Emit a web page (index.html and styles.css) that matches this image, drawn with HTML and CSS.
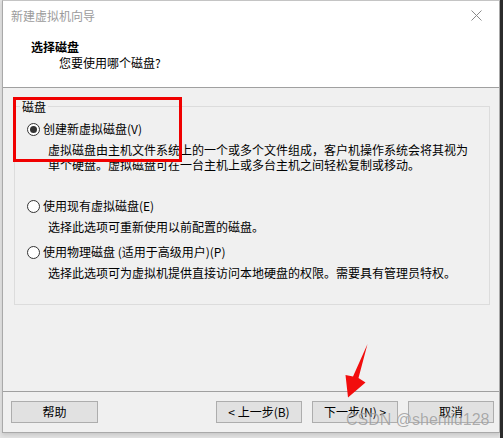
FILE: index.html
```html
<!DOCTYPE html>
<html lang="zh-CN">
<head>
<meta charset="utf-8">
<title>新建虚拟机向导</title>
<link rel="stylesheet" href="styles.css">
</head>
<body>
<div class="screen">
  <div class="dialog">
    <div class="titlebar">
      <span class="title">新建虚拟机向导</span>
      <svg class="close" width="11" height="11" viewBox="0 0 11 11"><path d="M0.5 0.5 L10.5 10.5 M10.5 0.5 L0.5 10.5" stroke="#8a8a8a" stroke-width="1" fill="none"/></svg>
    </div>
    <div class="header">
      <div class="h-title">选择磁盘</div>
      <div class="h-sub">您要使用哪个磁盘?</div>
    </div>
    <div class="content">
      <div class="group">
        <span class="legend">磁盘</span>
        <div class="opt first">
          <span class="radio checked"></span>
          <span class="label">创建新虚拟磁盘(V)</span>
        </div>
        <div class="desc">虚拟磁盘由主机文件系统上的一个或多个文件组成，客户机操作系统会将其视为<br>单个硬盘。虚拟磁盘可在一台主机上或多台主机之间轻松复制或移动。</div>
        <div class="opt second">
          <span class="radio"></span>
          <span class="label">使用现有虚拟磁盘(E)</span>
        </div>
        <div class="desc">选择此选项可重新使用以前配置的磁盘。</div>
        <div class="opt third">
          <span class="radio"></span>
          <span class="label">使用物理磁盘 (适用于高级用户)(P)</span>
        </div>
        <div class="desc">选择此选项可为虚拟机提供直接访问本地硬盘的权限。需要具有管理员特权。</div>
      </div>
    </div>
    <div class="footer">
      <button class="btn help">帮助</button>
      <div class="nav">
        <button class="btn">&lt; 上一步(B)</button>
        <button class="btn">下一步(N) &gt;</button>
        <button class="btn">取消</button>
      </div>
    </div>
  </div>
  <div class="strip"></div>
</div>
<div class="highlight"></div>
<svg class="arrow" width="503" height="438" viewBox="0 0 503 438"><polygon points="367.5,344 358.5,378 365.5,382.5 348,397.5 345.5,375 353,376.5" fill="#f20d0d"/></svg>
<div class="watermark">CSDN @shenliu128</div>
</body>
</html>
```

FILE: styles.css
```css
html, body {
  margin: 0;
  padding: 0;
}
body {
  width: 503px;
  height: 438px;
  overflow: hidden;
  background: #e2e2e2;
  font-family: "Noto Sans CJK SC", "Microsoft YaHei", sans-serif;
  font-size: 12px;
  color: #000;
  position: relative;
}
.screen {
  display: flex;
  height: 438px;
}
.dialog {
  margin-left: 2px;
  width: 498px;
  height: 433px;
  box-sizing: border-box;
  border: 1px solid #a9a9a9;
  border-top-color: #c4c4c4;
  background: #f0f0f0;
  display: flex;
  flex-direction: column;
  box-shadow: 0 2px 4px rgba(0,0,0,0.12);
}
.strip {
  flex: 1;
  background: #2b2b2b;
}
.titlebar {
  height: 29px;
  background: #fff;
  display: flex;
  align-items: center;
  padding-left: 8px;
}
.title {
  color: #9b9b9b;
  line-height: 16px;
}
.close {
  margin-left: auto;
  margin-right: 17px;
}
.header {
  background: #fff;
  border-bottom: 1px solid #a0a0a0;
  padding: 9px 0 0 28px;
  box-sizing: content-box;
  height: 48px;
}
.h-title {
  font-weight: bold;
  line-height: 16px;
}
.h-sub {
  line-height: 16px;
  padding-left: 28px;
}
.content {
  height: 304px;
  padding: 18px 9px 0 11px;
  box-sizing: border-box;
  border-bottom: 1px solid #a0a0a0;
}
.group {
  height: 199px;
  box-sizing: border-box;
  border: 1px solid #dcdcdc;
}
.legend {
  display: table;
  margin: -7px 0 0 5px;
  padding: 0 2px;
  line-height: 14px;
  background: #f0f0f0;
}
.opt {
  display: flex;
  align-items: center;
  height: 16px;
  padding-left: 12px;
}
.opt.first { margin-top: 7px; }
.opt.second { margin-top: 26px; }
.opt.third { margin-top: 10px; }
.radio {
  width: 13px;
  height: 13px;
  box-sizing: border-box;
  border: 1px solid #333;
  border-radius: 50%;
  background: #fff;
  display: flex;
  align-items: center;
  justify-content: center;
  margin-right: 3px;
}
.radio.checked::after {
  content: "";
  width: 7px;
  height: 7px;
  border-radius: 50%;
  background: #333;
}
.label {
  line-height: 16px;
  white-space: nowrap;
}
.desc {
  margin-top: 5px;
  padding-left: 33px;
  line-height: 15px;
  white-space: nowrap;
}
.footer {
  flex: 1;
  display: flex;
  justify-content: space-between;
  align-items: flex-start;
  padding: 9px 5px 0 8px;
}
.nav {
  display: flex;
  gap: 10px;
}
.btn {
  height: 22px;
  width: 86px;
  box-sizing: border-box;
  border: 1px solid #adadad;
  background: #e1e1e1;
  font-family: "Noto Sans CJK SC", "Microsoft YaHei", sans-serif;
  font-size: 12px;
  line-height: 18px;
  padding: 0;
  color: #000;
}
.btn.help {
  width: 87px;
}
.highlight {
  position: absolute;
  left: 13px;
  top: 97px;
  width: 169px;
  height: 65px;
  box-sizing: border-box;
  border: 3px solid #f00000;
}
.arrow {
  position: absolute;
  left: 0;
  top: 0;
}
.watermark {
  position: absolute;
  left: 346px;
  top: 410px;
  font-family: "Liberation Sans", Arial, sans-serif;
  font-size: 16px;
  line-height: 20px;
  color: rgba(120,120,120,0.6);
  text-shadow: 0 0 1px rgba(255,255,255,0.6);
}
```
